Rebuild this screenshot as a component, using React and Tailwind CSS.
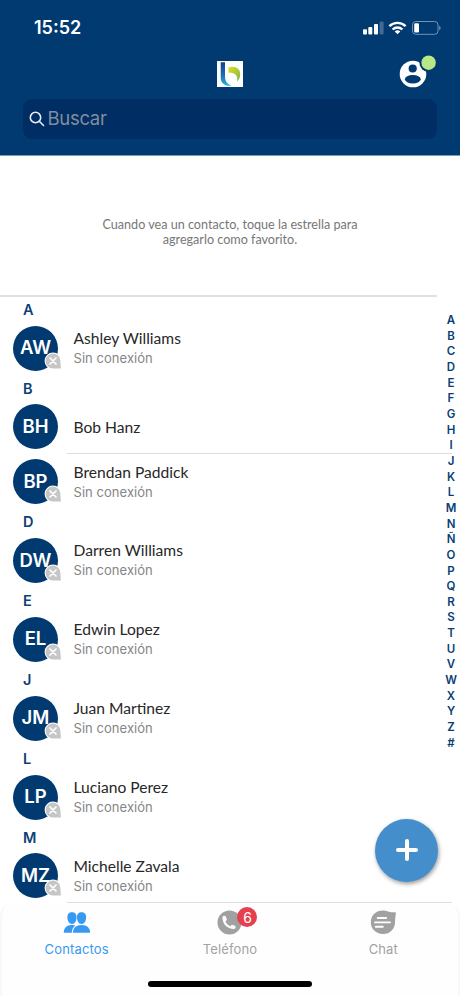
import React from "react";

const LATO = "font-['Lato',sans-serif]";

const sections = [
  { letter: "A", people: [{ initials: "AW", name: "Ashley Williams", offline: true }] },
  {
    letter: "B",
    people: [
      { initials: "BH", name: "Bob Hanz", offline: false, divider: true },
      { initials: "BP", name: "Brendan Paddick", offline: true },
    ],
  },
  { letter: "D", people: [{ initials: "DW", name: "Darren Williams", offline: true }] },
  { letter: "E", people: [{ initials: "EL", name: "Edwin Lopez", offline: true }] },
  { letter: "J", people: [{ initials: "JM", name: "Juan Martinez", offline: true }] },
  { letter: "L", people: [{ initials: "LP", name: "Luciano Perez", offline: true }] },
  { letter: "M", people: [{ initials: "MZ", name: "Michelle Zavala", offline: true, divider: true }] },
];

const indexLetters = "ABCDEFGHIJKLMNÑOPQRSTUVWXYZ#".split("");

function StatusBar() {
  return (
    <div className="flex h-14 items-center pl-[34px] pr-[19px] text-white">
      <span className="text-[18px] font-semibold leading-none">15:52</span>
      <svg className="ml-auto" width="78" height="16" viewBox="0 0 78 16" fill="white">
        <rect x="0" y="9.2" width="4" height="5.3" rx="1" />
        <rect x="5.3" y="7" width="4" height="7.5" rx="1" />
        <rect x="11" y="4" width="4" height="10.5" rx="1" />
        <rect x="16.6" y="1.6" width="4" height="12.9" rx="1" opacity=".25" />
        <g fill="none" stroke="white" strokeWidth="2.4">
          <path d="M26.400 6.200a11.500 11.500 0 0 1 16.200 0" />
          <path d="M29.600 9.500a7 7 0 0 1 9.800 0" />
        </g>
        <path d="M34.500 14.300 31.700 11.500a4 4 0 0 1 5.600 0z" />
        <rect x="49.500" y="1.500" width="25.500" height="12.800" rx="3.300" fill="none" stroke="#7393b6" strokeWidth="1" />
        <rect x="51.200" y="3.200" width="4.800" height="9.400" rx="1.300" />
        <path d="M76.200 5.800a2.400 2.400 0 0 1 0 4.400z" fill="#7393b6" />
      </svg>
    </div>
  );
}

function Logo() {
  return (
    <svg width="26" height="26" viewBox="0 0 26 26">
      <defs>
        <linearGradient id="stem" x1="0" y1="0" x2="0" y2="1">
          <stop offset="0" stopColor="#143f87" />
          <stop offset=".55" stopColor="#1d6eae" />
          <stop offset="1" stopColor="#29b3df" />
        </linearGradient>
        <linearGradient id="leaf" x1="0" y1="0" x2="1" y2="1">
          <stop offset="0" stopColor="#dedb20" />
          <stop offset=".6" stopColor="#a5c73b" />
          <stop offset="1" stopColor="#78af4a" />
        </linearGradient>
      </defs>
      <rect width="26" height="26" fill="#fdfefe" />
      <path d="M3.700 1.200H8v14.300c0 4.500 2.200 7.500 6.500 9.200-6.800.6-10.800-2.500-10.800-8.200z" fill="url(#stem)" />
      <path d="M11.500 6.200c7-1.800 11.700 1.300 11.700 6.800 0 3.200-1 5.600-3.200 7.600 1.100-5.500-1-8.900-8.500-9z" fill="url(#leaf)" />
    </svg>
  );
}

function Profile() {
  return (
    <svg width="38" height="34" viewBox="0 0 38 34">
      <circle cx="14" cy="19" r="13.300" fill="white" />
      <circle cx="13.700" cy="13.500" r="4.100" fill="#003a70" />
      <ellipse cx="13.800" cy="24.200" rx="7.900" ry="4.200" fill="#003a70" />
      <circle cx="29.600" cy="7.700" r="9.200" fill="#003a70" />
      <circle cx="29.600" cy="7.700" r="7.200" fill="#b8e986" />
    </svg>
  );
}

function Header() {
  return (
    <header className="h-[156px] shrink-0 border-b border-[#7f9bb8] bg-[#003a70]">
      <StatusBar />
      <div className="grid h-9 grid-cols-3 items-center">
        <span />
        <span className="flex justify-center pb-px"><Logo /></span>
        <span className="-mt-px flex justify-end self-start pr-[23px]"><Profile /></span>
      </div>
      <div className="mx-[23px] mt-[7px] flex h-10 items-center rounded-[9px] bg-[#002d63] pl-[5.500px]">
        <svg width="16" height="16" viewBox="0 0 16 16" fill="none" stroke="#e4edf7" strokeWidth="1.600" strokeLinecap="round">
          <circle cx="6.500" cy="6.500" r="5.200" />
          <path d="m10.300 10.300 4.200 4.200" />
        </svg>
        <span className="ml-[3px] pb-px text-[18.500px] leading-none tracking-[-0.300px] text-[#808d9e]">Buscar</span>
      </div>
    </header>
  );
}

function OfflineBadge() {
  return (
    <svg className="absolute bottom-px -right-[4px]" width="18" height="18" viewBox="0 0 18 18">
      <path d="M9 .6a8.400 8.400 0 1 0 0 16.800h8.400V9A8.400 8.400 0 0 0 9 .6z" fill="white" />
      <path d="M9 1.600a7.400 7.400 0 1 0 0 14.800h7.900l-.5-7.400A7.400 7.400 0 0 0 9 1.600z" fill="#c6c6c6" />
      <path d="m6 6 6 6m0-6-6 6" stroke="white" strokeWidth="1.700" strokeLinecap="round" />
    </svg>
  );
}

function Contact({ person }) {
  return (
    <div className="relative flex h-[54.700px] items-center pl-[13px]">
      <div className="relative flex size-[45px] shrink-0 items-center justify-center rounded-full bg-[#003a70] text-[18.500px] font-semibold text-white">
        {person.initials}
        {person.offline && <OfflineBadge />}
      </div>
      <div className="ml-[15.500px] flex flex-col pt-px">
        <span className={`${LATO} text-[15.600px] leading-[19px] text-[#272727]`}>{person.name}</span>
        {person.offline && <span className="mt-px text-[13px] leading-[19px] tracking-[0.050px] text-[#858585]">Sin conexión</span>}
      </div>
      {person.divider && <div className="absolute bottom-0 left-[67px] right-[8px] h-[1.500px] bg-[#dedede]" />}
    </div>
  );
}

function AlphabetIndex() {
  return (
    <div className="absolute right-0 top-[313px] flex w-[18px] flex-col items-center text-[11.500px] font-semibold text-[#093e75]">
      {indexLetters.map((l) => (
        <span key={l} className="h-[15.670px] leading-[15.670px]">{l}</span>
      ))}
    </div>
  );
}

function ContactsIcon() {
  return (
    <svg width="28" height="24" viewBox="0 0 28 24" fill="#379af2">
      <path d="M9 1.200c2.900 0 4.500 1.500 4.500 5.100 0 3.800-1.500 6.700-4.500 6.700s-4.600-2.900-4.600-6.700C4.400 2.700 6 1.200 9 1.200z" />
      <path d="M.8 21.800c0-4.800 3-7.800 7.600-7.800 1.800 0 3 .2 4 .8-2.300 1.400-3.600 3.800-3.600 7z" />
      <path d="M18.600 1.200c2.900 0 4.500 1.500 4.500 5.100 0 3.800-1.500 6.700-4.500 6.700S14 10.100 14 6.300c0-3.600 1.600-5.100 4.600-5.100z" />
      <path d="M9.900 21.800c0-4.800 3.300-7.800 8.700-7.800s8.500 3 8.500 7.800z" />
    </svg>
  );
}

function PhoneIcon() {
  return (
    <svg width="25" height="25" viewBox="0 0 25 25">
      <circle cx="12.500" cy="12.500" r="12" fill="#a1a1a1" />
      <path transform="translate(4.700 5) scale(.61)" fill="white" d="M6.600 2.200 4 1.200C2.500 1.400 1.200 2.700 1.200 4.200c0 10.700 8 18.700 18.700 18.700 1.500 0 2.800-1.300 3-2.800l-1-2.600-5.200-1.700-2.900 2.500c-3.500-1.600-6.100-4.200-7.700-7.700l2.500-2.900z" />
    </svg>
  );
}

function ChatIcon() {
  return (
    <svg width="27" height="25" viewBox="0 0 27 25">
      <path d="M12.800.5c4 0 5.600 2 12 1.700.9 0 1.300.6 1.100 1.400-.5 3-.8 5.300-.8 8.100 0 7.200-5 12.300-12.100 12.300C6 24 .8 19 .8 12.300.8 5.400 5.900.5 12.800.5z" fill="#a1a1a1" />
      <path d="M7.700 8h8.500M5 12.400h15M5.800 16.800h7" stroke="white" strokeWidth="1.900" strokeLinecap="round" />
    </svg>
  );
}

function Tab({ icon, label, active, badge }) {
  return (
    <div className={`flex flex-1 flex-col items-center ${active ? "text-[#379af2]" : "text-[#a3a3a3]"}`}>
      <div className="relative flex h-[25px] items-center">
        {icon}
        {badge && (
          <span className="absolute -right-[15px] -top-[3px] flex size-5 items-center justify-center rounded-full bg-[#e5404f] text-[14px] text-white">
            {badge}
          </span>
        )}
      </div>
      <span className="mt-[5px] text-[13px] leading-[18px] tracking-[0.150px]">{label}</span>
    </div>
  );
}

function TabBar() {
  return (
    <nav className="flex h-[92px] shrink-0 flex-col rounded-t-xl border-x-2 border-[#f8f8f8] bg-[#fefefe]">
      <div className="-mx-[2px] flex pt-[6px]">
        <Tab icon={<ContactsIcon />} label="Contactos" active />
        <Tab icon={<PhoneIcon />} label="Teléfono" badge="6" />
        <Tab icon={<ChatIcon />} label="Chat" />
      </div>
      <div className="mx-auto mt-auto mb-[9px] h-[6px] w-[164px] rounded-full bg-black" />
    </nav>
  );
}

export default function App() {
  return (
    <div className="relative flex h-[996px] w-[460px] flex-col overflow-hidden bg-white font-['Inter',sans-serif]">
      <Header />
      <div className="flex h-[139px] shrink-0 justify-center pt-[61px]">
        <p className={`${LATO} text-center text-[12.600px] leading-[15px] text-[#777777]`}>
          Cuando vea un contacto, toque la estrella para
          <br />
          agregarlo como favorito.
        </p>
      </div>
      <div className="h-[1.500px] w-[437px] shrink-0 bg-[#e0e0e0]" />
      <main className="h-[607.500px] shrink-0">
        {sections.map((s) => (
          <section key={s.letter}>
            <h2 className="flex h-[24.200px] items-center pl-[23px] pt-[2px] text-[14.500px] font-semibold text-[#0d4177]">{s.letter}</h2>
            {s.people.map((p) => <Contact key={p.initials} person={p} />)}
          </section>
        ))}
      </main>
      <TabBar />
      <AlphabetIndex />
      <button className="absolute left-[375px] top-[819px] flex size-[63px] items-center justify-center rounded-full bg-[#458ecc] pb-px shadow-[1px_2px_4px_rgba(0,0,0,0.4)]">
        <svg width="24" height="24" viewBox="0 0 24 24" stroke="white" strokeWidth="4" strokeLinecap="round">
          <path d="M12 3v18M3 12h18" />
        </svg>
      </button>
    </div>
  );
}
